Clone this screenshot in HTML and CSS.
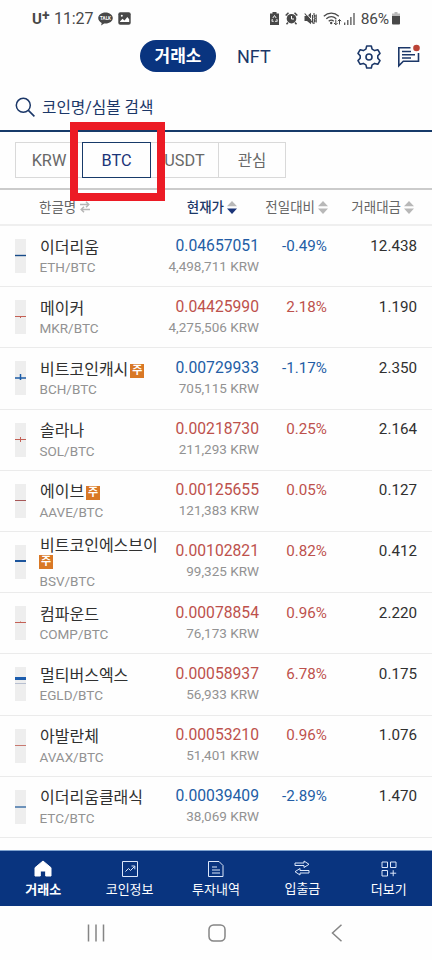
FILE: index.html
```html
<!DOCTYPE html>
<html lang="ko">
<head>
<meta charset="utf-8">
<title>거래소</title>
<link rel="stylesheet" href="styles.css">
</head>
<body>
<div class="status">
  <span class="carrier">U<sup>+</sup></span>
  <span class="clock">11:27</span>
  <svg class="talk" width="15" height="14" viewBox="0 0 15 14"><path d="M7.5 0.5C3.4.5.2 3 .2 6.1c0 2.1 1.400 3.900 3.500 4.900l-.6 2.500 3-2c4.900.6 8.700-2 8.700-5.400C14.800 3 11.600.5 7.500.5z" fill="#484848"/><text x="7.500" y="8" text-anchor="middle" class="talk-text">TALK</text></svg>
  <svg class="photo" width="13" height="13" viewBox="0 0 13 13"><rect x=".3" y=".3" width="12.400" height="12.400" rx="2" fill="#484848"/><path d="M2 9.500l2.500-2.800 2 1.900L9.300 5 11.200 7.300V10H2z" fill="#fff"/><circle cx="3.800" cy="3.800" r="1" fill="#fff"/></svg>
  <div class="status-right">
    <svg width="9" height="13" viewBox="0 0 9 13"><path d="M2.500 0h4v1.500H9V13H0V1.500h2.500z" fill="#484848"/><path d="M2.800 6l1.700-2.500L6.200 6M6.800 7l.5 2.300H5M3.700 9.300H1.900L2.300 7" fill="none" stroke="#fff" stroke-width=".9"/></svg>
    <svg width="13" height="13" viewBox="0 0 13 13"><circle cx="6.500" cy="6.700" r="4.800" fill="#484848"/><path d="M.7 3.500L3.500.8M9.500.8l2.800 2.700M3 10.500l-1.500 1.700M10 10.500l1.500 1.700" stroke="#484848" stroke-width="1.500"/><path d="M6.500 4v3H9" fill="none" stroke="#fff"/></svg>
    <svg width="13" height="13" viewBox="0 0 13 13"><path d="M.5 4H3l4-3.200v11.400L3 9H.5z" fill="#484848"/><path d="M1.700.8l8.800 10.500" stroke="#fff" stroke-width="1"/><path d="M.7 1.500l8.500 10M8.500 3v7M10 1v2l1 1-1 1 1 1.500-1 1.500 1 1-1 1v2M12.200 2.500v8" fill="none" stroke="#484848" stroke-width="1.100"/></svg>
    <svg class="wifi" width="19" height="14" viewBox="0 0 19 14"><path d="M.8 4.200c4.500-4 10.500-4 15 0M3.300 6.800c3-2.600 7-2.600 10 0M5.700 9.200c1.600-1.400 3.600-1.400 5 0" fill="none" stroke="#484848" stroke-width="1.250"/><circle cx="8.200" cy="11" r="1.200" fill="#484848"/><path d="M12.800 7.500v5.300M11 11l1.800 1.800L14.600 11M16.500 12.500V7.500M14.800 9.200l1.700-1.700 1.700 1.700" fill="none" stroke="#484848"/></svg>
    <svg width="11" height="12" viewBox="0 0 11 12"><path d="M.7 12V9.500M3.800 12V7M6.900 12V4M10 12V0" stroke="#484848" stroke-width="1.200"/></svg>
    <span class="percent">86%</span>
    <svg width="8" height="13" viewBox="0 0 8 13"><path d="M2.500 0h3v1.500H8V4.500H0v-3h2.500z" fill="#b9b9b9"/><path d="M0 4h8v7.500a1 1 0 0 1-1 1H1a1 1 0 0 1-1-1z" fill="#484848"/></svg>
  </div>
</div>

<header class="top">
  <span class="pill">거래소</span>
  <span class="nft">NFT</span>
  <svg class="gear" width="24" height="26" viewBox="0 0 24 26"><path d="M9.700 2h4.600l.8 3.100 2.600 1.500 3.100-.9 2.200 3.700-2.200 2.300v2.600l2.200 2.300-2.200 3.700-3.100-.9-2.600 1.500-.8 3.100H9.700l-.8-3.100-2.600-1.500-3.100.9L1 16.600l2.200-2.300v-2.600L1 9.400l2.200-3.700 3.100.9 2.600-1.500z" fill="none" stroke="#1b3768" stroke-width="1.600" stroke-linejoin="round"/><circle cx="12" cy="13" r="3" fill="none" stroke="#1b3768" stroke-width="1.600"/></svg>
  <svg class="chat" width="25" height="25" viewBox="0 0 25 25"><path d="M14.500 4.800H2.800v18l4.500-4.500h15.200V10" fill="none" stroke="#1b3768" stroke-width="1.600"/><path d="M6 8.500h9M6 11.700h13M6 15h9" stroke="#1b3768" stroke-width="1.500"/><circle cx="20.500" cy="5" r="3.300" fill="#bb4336"/></svg>
</header>

<div class="search">
  <svg width="21" height="21" viewBox="0 0 21 21"><circle cx="8.300" cy="8.300" r="7" fill="none" stroke="#1b3768" stroke-width="1.500"/><path d="M13.400 13.400l6 6" stroke="#1b3768" stroke-width="1.600"/></svg>
  <span>코인명/심볼 검색</span>
</div>

<div class="markets">
  <span class="market">KRW</span>
  <span class="market active">BTC<i class="highlight"></i></span>
  <span class="market usdt">USDT</span>
  <span class="market kr">관심</span>
</div>

<div class="columns">
  <span class="col-name">한글명 <svg width="10" height="12" viewBox="0 0 10 12"><path d="M0 3.500h8.500M6 .8l2.800 2.700L6 6.200M10 8.500H1.500M4 5.800L1.200 8.500 4 11.200" fill="none" stroke="#b5b5b5" stroke-width="1.500"/></svg></span>
  <span class="on">현재가<svg width="10" height="13" viewBox="0 0 10 13"><path d="M0 5.300L5 0l5 5.300z" fill="#b8b8b8"/><path d="M0 7.500h10L5 13z" fill="#1b3478"/></svg></span>
  <span>전일대비<svg width="10" height="13" viewBox="0 0 10 13"><path d="M0 5.300L5 0l5 5.300zM0 7.500h10L5 13z" fill="#b8b8b8"/></svg></span>
  <span>거래대금<svg width="10" height="13" viewBox="0 0 10 13"><path d="M0 5.300L5 0l5 5.300zM0 7.500h10L5 13z" fill="#b8b8b8"/></svg></span>
</div>

<main class="list">
  <div class="row down"><svg class="candle" viewBox="0 0 11 34"><path d="M0 16.500h11" stroke="#174b89" stroke-width="1.400"/></svg><div class="name"><b>이더리움</b><small>ETH/BTC</small></div><div class="price"><b>0.04657051</b><small>4,498,711 KRW</small></div><span class="rate">-0.49%</span><span class="volume">12.438</span></div>
  <div class="row up"><svg class="candle" viewBox="0 0 11 34"><path d="M0 16.500h11M5.500 17v1" stroke="#c46055"/></svg><div class="name"><b>메이커</b><small>MKR/BTC</small></div><div class="price"><b>0.04425990</b><small>4,275,506 KRW</small></div><span class="rate">2.18%</span><span class="volume">1.190</span></div>
  <div class="row down"><svg class="candle" viewBox="0 0 11 34"><path d="M0 17h11M5.500 13v6" stroke="#1c5ca7" stroke-width="1.500"/></svg><div class="name"><b>비트코인캐시<i class="badge">주</i></b><small>BCH/BTC</small></div><div class="price"><b>0.00729933</b><small>705,115 KRW</small></div><span class="rate">-1.17%</span><span class="volume">2.350</span></div>
  <div class="row up"><svg class="candle" viewBox="0 0 11 34"><path d="M0 16.500h11M5.500 14v5" stroke="#c46055"/></svg><div class="name"><b>솔라나</b><small>SOL/BTC</small></div><div class="price"><b>0.00218730</b><small>211,293 KRW</small></div><span class="rate">0.25%</span><span class="volume">2.164</span></div>
  <div class="row up"><svg class="candle" viewBox="0 0 11 34"><path d="M0 16.500h11" stroke="#a75757"/></svg><div class="name"><b>에이브<i class="badge">주</i></b><small>AAVE/BTC</small></div><div class="price"><b>0.00125655</b><small>121,383 KRW</small></div><span class="rate">0.05%</span><span class="volume">0.127</span></div>
  <div class="row up"><svg class="candle" viewBox="0 0 11 34"><path d="M0 16h11" stroke="#1c559c" stroke-width="2"/></svg><div class="name wrapped"><b>비트코인에스브이<i class="badge">주</i></b><small>BSV/BTC</small></div><div class="price"><b>0.00102821</b><small>99,325 KRW</small></div><span class="rate">0.82%</span><span class="volume">0.412</span></div>
  <div class="row up"><svg class="candle" viewBox="0 0 11 34"><path d="M0 16.500h11M5.500 15.500v1" stroke="#c46055"/></svg><div class="name"><b>컴파운드</b><small>COMP/BTC</small></div><div class="price"><b>0.00078854</b><small>76,173 KRW</small></div><span class="rate">0.96%</span><span class="volume">2.220</span></div>
  <div class="row up"><svg class="candle" viewBox="0 0 11 34"><path d="M0 11.500h11" stroke="#1b5cad" stroke-width="3"/><path d="M0 16.500h11" stroke="#b7bfd0"/></svg><div class="name"><b>멀티버스엑스</b><small>EGLD/BTC</small></div><div class="price"><b>0.00058937</b><small>56,933 KRW</small></div><span class="rate">6.78%</span><span class="volume">0.175</span></div>
  <div class="row up"><svg class="candle" viewBox="0 0 11 34"><path d="M0 16.500h11" stroke="#c87970"/></svg><div class="name"><b>아발란체</b><small>AVAX/BTC</small></div><div class="price"><b>0.00053210</b><small>51,401 KRW</small></div><span class="rate">0.96%</span><span class="volume">1.076</span></div>
  <div class="row down"><svg class="candle" viewBox="0 0 11 34"><path d="M0 17h11" stroke="#28609e" stroke-width="1.300"/></svg><div class="name"><b>이더리움클래식</b><small>ETC/BTC</small></div><div class="price"><b>0.00039409</b><small>38,069 KRW</small></div><span class="rate">-2.89%</span><span class="volume">1.470</span></div>
</main>

<nav class="tabs">
  <a class="current"><svg width="18" height="18" viewBox="0 0 18 18"><path d="M9 1l8 6.700V16H11.700v-5H6.300v5H1V7.700z" fill="#fff" stroke="#fff" stroke-linejoin="round"/></svg>거래소</a>
  <a><svg width="18" height="18" viewBox="0 0 18 18"><path d="M1.500 1.500h15v15h-15zM4.500 11.500l3-3 2 2 4-4M10.500 6h3.300v3.300"/></svg>코인정보</a>
  <a><svg width="18" height="18" viewBox="0 0 18 18"><path d="M1.500 1.500h10.500l4 4v11H1.500zM5 7h5M5 10h8M5 13h8"/></svg>투자내역</a>
  <a class="transfer"><svg width="18" height="18" viewBox="0 0 18 18"><path d="M2 4h9V2l5 3.300-5 3.200V6.500H2zM16 11.500H7V9.500l-5 3.200L7 16v-2h9z"/></svg>입출금</a>
  <a><svg width="18" height="18" viewBox="0 0 18 18"><path d="M2 2h5.500v5.500H2zM10.500 2H16v5.500h-5.500zM2 10.500h5.500V16H2zM13.200 10.200v6M10.200 13.200h6"/></svg>더보기</a>
</nav>

<footer class="system">
  <svg width="18" height="18" viewBox="0 0 18 18"><path d="M1.500.5v17M9 .5v17M16.500.5v17"/></svg>
  <svg width="18" height="18" viewBox="0 0 18 18"><rect x="1" y="1" width="16" height="16" rx="4.500"/></svg>
  <svg width="18" height="18" viewBox="0 0 18 18"><path d="M13.500.8L4.500 9l9 8.200"/></svg>
</footer>
</body>
</html>
```
FILE: styles.css
```css
* { box-sizing: border-box; }
body {
  margin: 0;
  width: 432px;
  height: 960px;
  overflow: hidden;
  display: flex;
  flex-direction: column;
  background: #fefefe;
  color: #303030;
  font-family: Roboto, "Noto Sans CJK KR", sans-serif;
}
svg { display: block; flex: none; }
b { font-weight: 400; }
i { font-style: normal; }

.status { height: 36px; flex: none; display: flex; align-items: center; padding: 1px 32px 0 32px; color: #484848; }
.carrier { width: 22px; font: 700 15px/18px Roboto, sans-serif; }
.carrier sup { font-size: 14px; line-height: 0; vertical-align: 4px; }
.clock { width: 44px; font-size: 16px; letter-spacing: -.1px; white-space: nowrap; }
.talk-text { font: 700 4.500px Roboto, sans-serif; fill: #fff; }
.photo { margin-left: 5px; }
.status-right { margin-left: auto; display: flex; align-items: center; gap: 6px; }
.wifi { margin-right: -4px; }
.percent { font-size: 15.500px; letter-spacing: -.2px; margin-right: -3px; }

.top { height: 50px; flex: none; display: flex; align-items: flex-start; padding: 4px 11px 0 140px; color: #1b3768; }
.pill { width: 76px; height: 32px; border-radius: 16px; background: #09347f; color: #fff; font-size: 17px; font-weight: 700; line-height: 33px; text-align: center; }
.nft { margin-left: 21px; font-size: 18px; line-height: 34px; }
.gear { margin: 4px 15px 0 auto; }
.chat { margin-top: 3px; }

.search { height: 46px; flex: none; display: flex; align-items: center; gap: 6px; padding: 0 0 1px 15px; border-bottom: 2px solid #173a69; color: #1b3768; font-size: 15.700px; line-height: 20px; }
.search span { padding-top: 1px; }

.markets { height: 58px; flex: none; display: flex; padding: 10px 15px; border-bottom: 2px solid #cbcbcb; }
.market { height: 36px; width: 68px; border: 1px solid #d9d9d9; border-left: 0; font-size: 16.300px; line-height: 35px; text-align: center; color: #686868; }
.market:first-child { width: 67px; border-left: 1px solid #d9d9d9; border-right: 0; }
.market.active { position: relative; width: 69px; border: 1px solid #173a69; color: #1b3478; }
.market.usdt { width: 68px; }
.market.kr { width: 67px; font-size: 15.500px; line-height: 36px; }
.highlight { position: absolute; left: -13px; top: -21px; width: 95px; height: 79px; border: 8px solid #ec1b25; }

.columns { height: 36px; flex: none; display: grid; grid-template-columns: 123px 99px 91px 86px; padding: 0 18px 0 15px; border-bottom: 2px solid #efefef; font-size: 13.500px; line-height: 20px; color: #666; }
.columns span { display: flex; align-items: center; justify-content: flex-end; gap: 3px; white-space: nowrap; }
.columns .col-name { justify-content: flex-start; padding-left: 24px; gap: 4px; }
.columns .on { color: #1b3768; font-weight: 500; }

.list { height: 624px; flex: none; }
.row { height: 61.200px; display: grid; grid-template-columns: 25px 122px 97px 68px 90px; padding-left: 15px; border-bottom: 1px solid #ebebeb; }
.candle { width: 11px; height: 34px; margin-top: 13px; background: #eee; }
.name, .price { display: flex; flex-direction: column; }
.name { padding-top: 9.500px; }
.name b { font-size: 16px; line-height: 23px; color: #303030; }
.name small { font-size: 13.500px; line-height: 18px; color: #929292; margin: -.5px 0 0 -.5px; }
.name.wrapped { padding-top: 3px; }
.name.wrapped b { line-height: 17px; padding-top: 2px; }
.name.wrapped small { margin-top: 1px; }
.badge { display: inline-block; width: 14px; height: 14px; margin-left: 2px; background: #d97825; color: #fff; font-size: 11px; font-weight: 700; line-height: 13px; text-align: center; vertical-align: 1px; }
.wrapped .badge { margin-left: -1px; vertical-align: 3px; }
.price { align-items: flex-end; padding-top: 9.500px; white-space: nowrap; }
.price b { font-size: 15.700px; line-height: 20px; }
.price small { font-size: 13.500px; line-height: 18px; margin-top: 1px; color: #929292; }
.rate, .volume { text-align: right; padding-top: 9.500px; font-size: 15.200px; line-height: 20px; }
.down .price b, .down .rate { color: #235da5; }
.up .price b, .up .rate { color: #bd514c; }

.tabs { height: 56px; flex: none; display: grid; grid-template-columns: repeat(5, 1fr); background: #09347f; border-top: 1px solid #7fa3cf; }
.tabs a { display: flex; flex-direction: column; align-items: center; padding-top: 9px; color: #fff; font-size: 13px; line-height: 20px; gap: 2px; }
.tabs a.transfer { padding-top: 8px; }
.tabs .current { font-weight: 700; }
.tabs a:not(.current) svg { fill: none; stroke: #dce7fa; stroke-width: 1; }

.system { flex: 1; display: flex; justify-content: space-between; align-items: center; padding: 0 86px 0 87px; }
.system svg { fill: none; stroke: #858585; stroke-width: 1.500; }
```
